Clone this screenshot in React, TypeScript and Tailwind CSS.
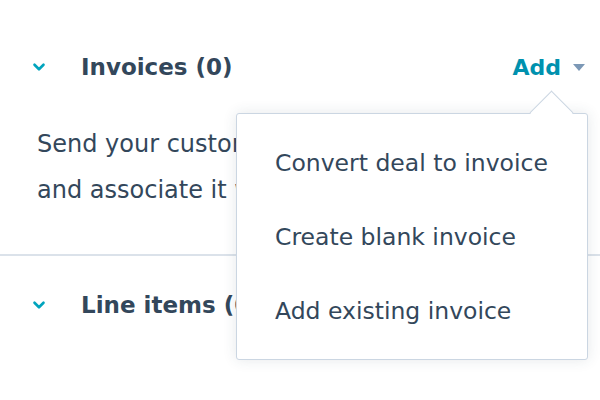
import { ChevronDown } from "lucide-react";

const MENU_ITEMS = ["Convert deal to invoice", "Create blank invoice", "Add existing invoice"];

function SectionHeader({ title }: { title: string }) {
  return (
    <div className="flex h-[60px] items-center">
      <div className="flex w-[81px] justify-start pl-[30px]">
        <ChevronDown className="h-[18px] w-[18px] text-[#00a4bd]" strokeWidth={3.5} />
      </div>
      <h2 className="text-[23px] font-bold text-[#33475b]">{title}</h2>
    </div>
  );
}

export default function App() {
  return (
    <div
      className="relative h-[400px] w-[600px] overflow-hidden bg-white text-[#33475b]"
      style={{ fontFamily: "'DejaVu Sans', 'Noto Sans', sans-serif" }}
    >
      {/* Invoices card */}
      <div className="pt-[37px]">
        <div className="flex items-center pr-[15px]">
          <div className="flex-1">
            <SectionHeader title="Invoices (0)" />
          </div>
          <button className="flex items-center gap-[12px] text-[22px] font-bold text-[#0091ae]">
            Add
            <svg width="12" height="7" viewBox="0 0 12 7">
              <path d="M0 0h12L6 7z" fill="#7c98b6" />
            </svg>
          </button>
        </div>
        <div className="w-[236px] overflow-hidden pl-[37px] pt-[24px] pb-[41px] text-[24px] leading-[46px]">
          <p className="whitespace-nowrap">Send your customers</p>
          <p className="whitespace-nowrap">and associate it with</p>
        </div>
      </div>

      <div className="border-t-2 border-[#dbe2ea]" />

      {/* Line items card */}
      <div className="pt-[19px]">
        <SectionHeader title="Line items (0)" />
      </div>

      {/* Dropdown menu */}
      <div className="absolute left-[236px] top-[113px] h-[247px] w-[352px] rounded-[3px] border border-[#cbd6e2] bg-white pt-[13px] shadow-[0_0_14px_rgba(45,62,80,0.12)]">
        <div className="absolute left-[299px] top-[-17px] h-[31px] w-[31px] rotate-45 border-l border-t border-[#cbd6e2] bg-white" />
        <ul className="relative">
          {MENU_ITEMS.map((item) => (
            <li key={item} className="flex h-[74px] items-center pl-[38px] text-[23.5px]">
              {item}
            </li>
          ))}
        </ul>
      </div>
    </div>
  );
}
